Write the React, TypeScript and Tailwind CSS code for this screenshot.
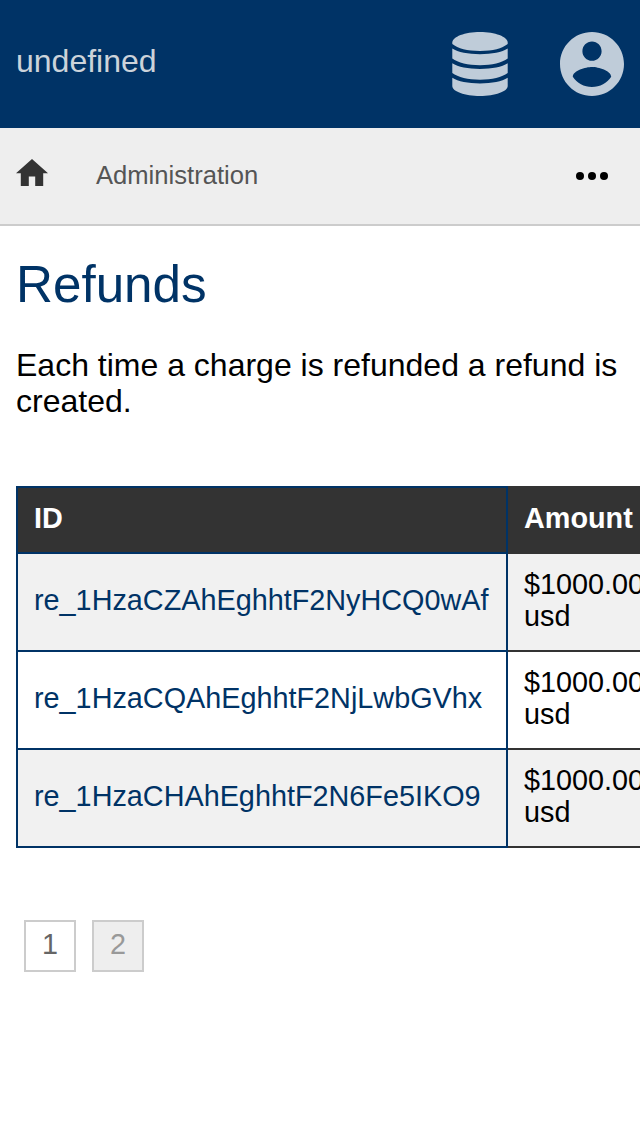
const refunds = ["re_1HzaCZAhEghhtF2NyHCQ0wAf", "re_1HzaCQAhEghhtF2NjLwbGVhx", "re_1HzaCHAhEghhtF2N6Fe5IKO9"];

function DatabaseIcon() {
  return (
    <svg className="h-16 w-14" viewBox="0 0 56 64" fill="currentColor" aria-hidden="true">
      <path d="M28 0C43 0 55.700 4.700 55.700 10.500V12C50 16.500 41 18.900 28 18.900S6 16.500.300 12V10.500C.300 4.700 13 0 28 0z" />
      <path d="M.300 16.600C6 20.200 16 22.300 28 22.300S50 20.200 55.700 16.600V26.500C50 30.800 40 33.200 28 33.200S6 30.800 .300 26.500z" />
      <path d="M.300 31.200C6 34.800 16 36.900 28 36.900S50 34.800 55.700 31.200V41.100C50 45.400 40 47.800 28 47.800S6 45.400 .300 41.100z" />
      <path d="M.300 45.800C6 49.400 16 51.500 28 51.500S50 49.400 55.700 45.800V54C55.700 59.500 43 64 28 64S.300 59.500 .300 54z" />
    </svg>
  );
}

function AccountIcon() {
  return (
    <svg className="size-16" viewBox="2 2 20 20" fill="currentColor" aria-hidden="true">
      <path d="M12 2C6.480 2 2 6.480 2 12s4.480 10 10 10 10-4.480 10-10S17.520 2 12 2zm0 3c1.660 0 3 1.340 3 3s-1.340 3-3 3-3-1.340-3-3 1.340-3 3-3zm0 14.200c-2.500 0-4.710-1.280-6-3.220.03-1.990 4-3.080 6-3.080 1.990 0 5.970 1.090 6 3.080-1.290 1.940-3.500 3.220-6 3.220z" />
    </svg>
  );
}

export default function App() {
  return (
    <div className="min-h-[1136px] w-full overflow-hidden bg-white font-['Liberation_Sans',sans-serif] text-[32px] leading-9 text-black">
      <header className="flex h-32 items-center justify-between bg-[#003366] px-4 text-[#bfccd9]">
        <span className="pb-1.5 text-[#ccd3da]">undefined</span>
        <div className="flex items-center gap-[52px]">
          <DatabaseIcon />
          <AccountIcon />
        </div>
      </header>

      <nav className="flex h-[98px] items-center border-b-2 border-[#cccccc] bg-[#eeeeee] px-4">
        <svg className="mb-2 h-[27px] w-8 text-[#333333]" viewBox="2 3 20 17" preserveAspectRatio="none" fill="currentColor" aria-label="Home">
          <path d="M10 20v-6h4v6h5v-8h3L12 3 2 12h3v8z" />
        </svg>
        <span className="ml-12 pb-0.5 text-[25.6px] text-[#555555]">Administration</span>
        <svg className="mr-4 ml-auto h-2 w-8" viewBox="0 0 32 8" fill="currentColor" aria-label="Menu">
          <circle cx="4" cy="4" r="4" />
          <circle cx="16" cy="4" r="4" />
          <circle cx="28" cy="4" r="4" />
        </svg>
      </nav>

      <main className="px-4 pt-[30px]">
        <h1 className="text-[51.2px] leading-[57px] text-[#003366]">Refunds</h1>
        <p className="mt-[34px]">Each time a charge is refunded a refund is created.</p>

        <div className="-mr-4 mt-[67px] overflow-hidden">
          <table className="w-[660px] table-fixed border-separate border-spacing-0 text-left text-[28.8px] leading-8">
            <thead>
              <tr className="h-[68px] bg-[#333333] text-white">
                <th className="w-[492px] border-2 border-[#003366] px-4 pt-0 pb-1 font-bold">ID</th>
                <th className="border-y-2 border-[#333333] px-4 pt-0 pb-1 font-bold">Amount</th>
              </tr>
            </thead>
            <tbody>
              {refunds.map((id) => (
                <tr key={id} className="h-[98px] odd:bg-[#f1f1f1]">
                  <td className="border-x-2 border-b-2 border-[#003366] px-4 pt-0 pb-1 text-[#003366]">{id}</td>
                  <td className="border-b-2 border-[#333333] px-4 pt-0 pb-1">$1000.00 usd</td>
                </tr>
              ))}
            </tbody>
          </table>
        </div>

        <div className="mt-[72px] ml-2 flex gap-4 text-[28.8px] leading-8">
          <span className="flex size-[52px] items-center justify-center border-2 border-[#cccccc] pb-1 text-[#666666]">1</span>
          <span className="flex size-[52px] items-center justify-center border-2 border-[#cccccc] bg-[#eeeeee] pb-1 text-[#999999]">2</span>
        </div>
      </main>
    </div>
  );
}
